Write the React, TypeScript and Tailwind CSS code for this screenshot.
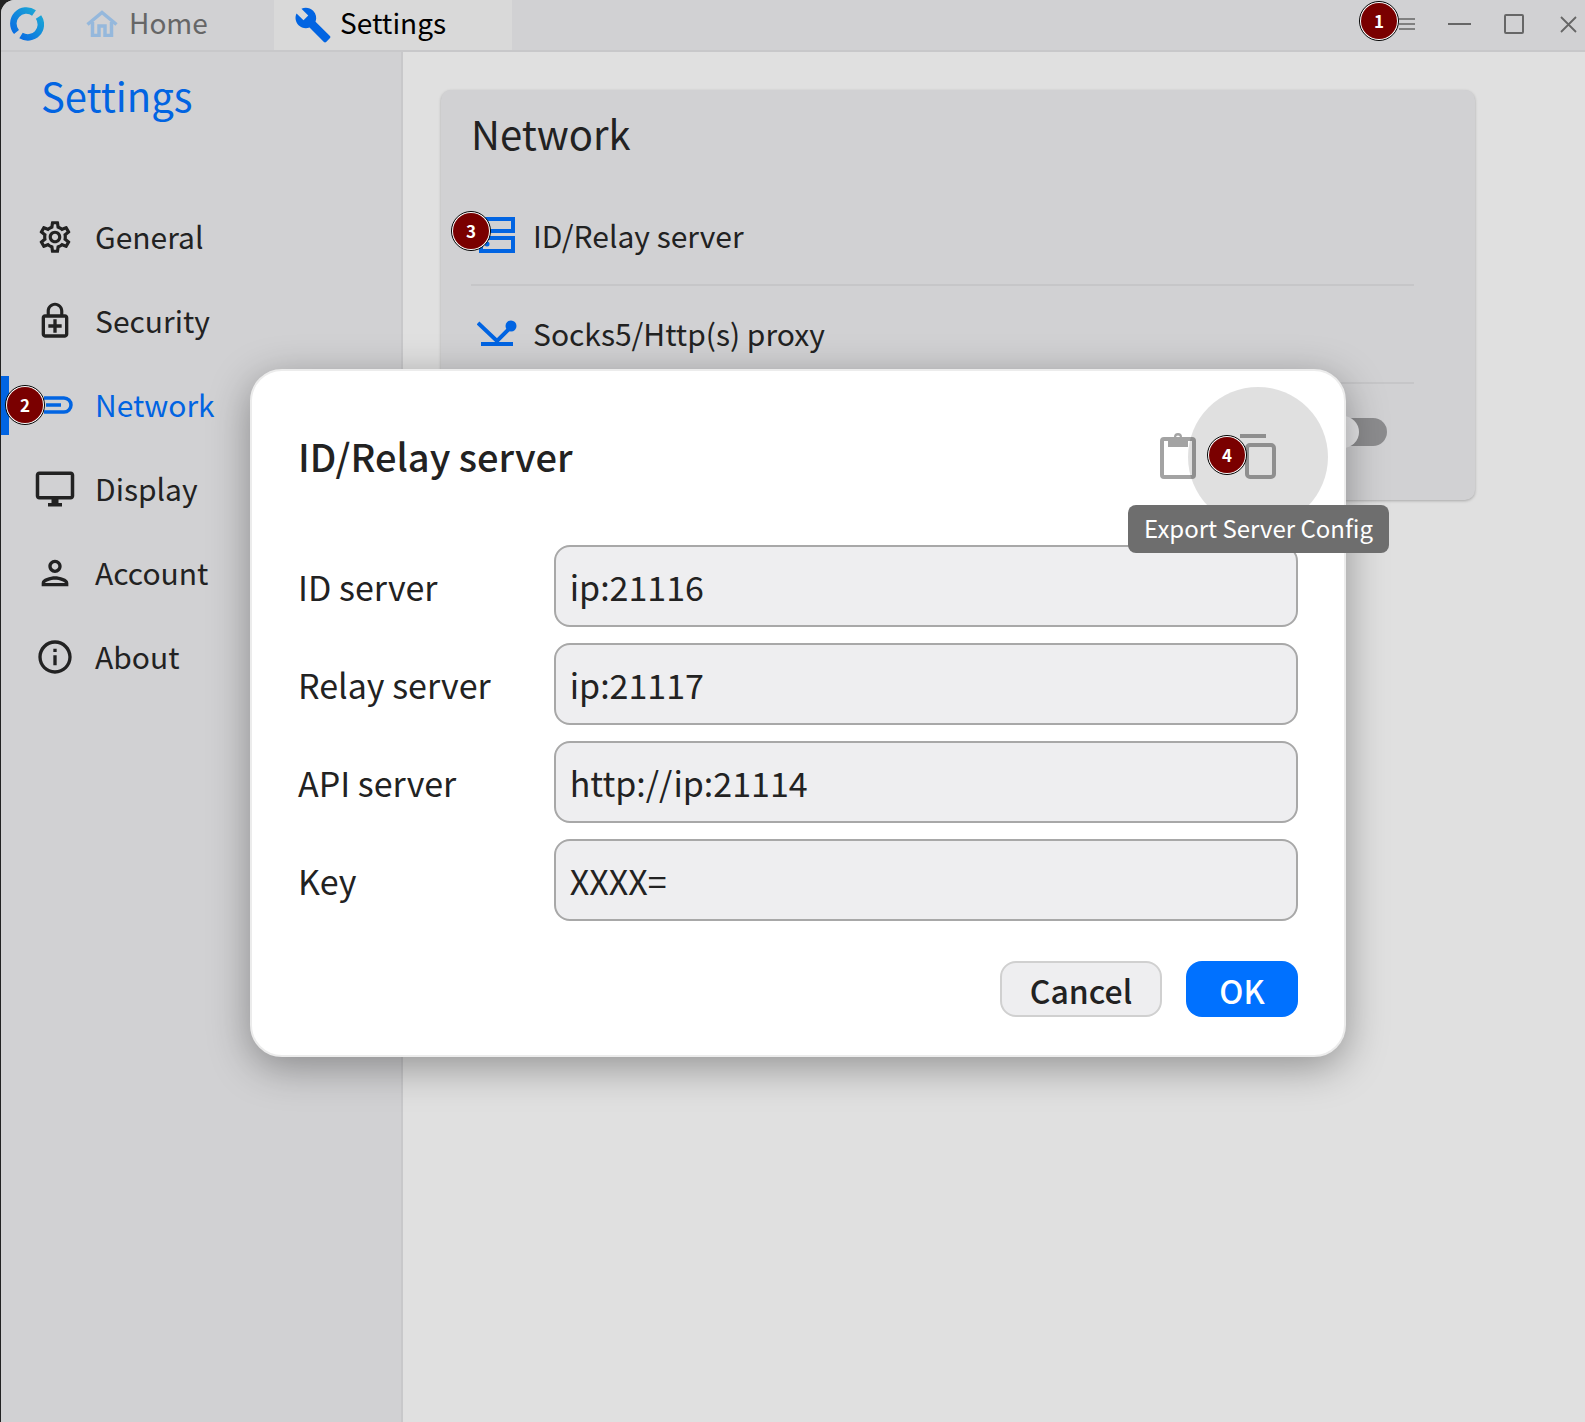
import { MdBuild, MdInfoOutline, MdOutlineDesktopWindows, MdOutlineEnhancedEncryption, MdOutlinePerson, MdOutlineSettings } from 'react-icons/md';

const font = { fontFamily: '"Noto Sans CJK SC", "Noto Sans", sans-serif' };

function Badge({ n, className }: { n: number; className: string }) {
  return (
    <div className={`absolute z-30 flex h-[40px] w-[40px] items-center justify-center rounded-full border border-black bg-white ${className}`}>
      <div className="flex h-[36px] w-[36px] items-center justify-center rounded-full bg-[#7a0000] text-[17px] font-bold text-white">{n}</div>
    </div>
  );
}

function Logo() {
  return (
    <svg width="34" height="34" viewBox="0 0 34 34" fill="none">
      <defs>
        <linearGradient id="logoA" x1="0" y1="1" x2="1" y2="0">
          <stop offset="0" stopColor="#0a6fe2" />
          <stop offset="1" stopColor="#1aa3d6" />
        </linearGradient>
        <linearGradient id="logoB" x1="1" y1="0" x2="0" y2="1">
          <stop offset="0" stopColor="#1aa3d6" />
          <stop offset="1" stopColor="#0a6fe2" />
        </linearGradient>
      </defs>
      <path d="M6.500 25A13 13 0 0 1 24 6" stroke="url(#logoA)" strokeWidth="6.500" />
      <path d="M28.500 10A13 13 0 0 1 11 28.500" stroke="url(#logoB)" strokeWidth="6.500" />
    </svg>
  );
}

function HomeIcon() {
  return (
    <svg width="32" height="27" viewBox="0 0 32 27" fill="none" stroke="#95b8dc" strokeWidth="3.500">
      <path d="M1.500 14.500 16 2.500l14.500 12" />
      <path d="M6.500 12v13.500h6.500V16h6v9.500h6.500V12" />
    </svg>
  );
}

function NetworkIcon() {
  return (
    <svg className="ml-[6px]" width="32" height="18" viewBox="0 0 32 18" fill="none" stroke="#0164e2" strokeWidth="3.500">
      <path d="M2 2h20a7 7 0 0 1 0 14H2" />
      <path d="M4 9h15" />
    </svg>
  );
}

function ServerIcon() {
  return (
    <svg width="36" height="36" viewBox="0 0 36 36" fill="none" stroke="#0164e2" strokeWidth="4">
      <path d="M2 2h32v12H2zM2 21h32v13H2z" />
      <circle cx="8" cy="27" r="2.500" fill="#0164e2" stroke="none" />
    </svg>
  );
}

function ProxyIcon() {
  return (
    <svg width="40" height="26" viewBox="0 0 40 26" fill="none" stroke="#0164e2" strokeWidth="4">
      <path d="M1 3 20 21 33 8" />
      <path d="M4 24h32" />
      <circle cx="34" cy="6" r="5.500" fill="#0164e2" stroke="none" />
    </svg>
  );
}

function ClipboardIcon() {
  return (
    <svg width="38" height="46" viewBox="0 0 38 46" fill="none">
      <rect x="2" y="6" width="32" height="38" rx="2" stroke="#a3a3a3" strokeWidth="4" />
      <path fillRule="evenodd" d="M8 4h6a4 4 0 0 1 8 0h6v10H8zM18 2.500a2 2 0 1 0 0 4 2 2 0 0 0 0-4z" fill="#a3a3a3" />
    </svg>
  );
}

function CopyIcon() {
  return (
    <svg width="40" height="46" viewBox="0 0 40 46" fill="none" stroke="#a3a3a3" strokeWidth="4">
      <path d="M2 3h26" />
      <rect x="9" y="12" width="27" height="32" rx="3" />
    </svg>
  );
}

const navItems = [
  { label: 'General', icon: <MdOutlineSettings size={38} color="#222" /> },
  { label: 'Security', icon: <MdOutlineEnhancedEncryption size={40} color="#222" /> },
  { label: 'Network', icon: <NetworkIcon />, active: true },
  { label: 'Display', icon: <MdOutlineDesktopWindows size={42} color="#222" /> },
  { label: 'Account', icon: <MdOutlinePerson size={40} color="#222" /> },
  { label: 'About', icon: <MdInfoOutline size={40} color="#222" /> },
];

const fields = [
  { label: 'ID server', value: 'ip:21116' },
  { label: 'Relay server', value: 'ip:21117' },
  { label: 'API server', value: 'http://ip:21114' },
  { label: 'Key', value: 'XXXX=' },
];

export default function App() {
  return (
    <div className="relative h-[1422px] w-[1585px] overflow-hidden bg-[#222]" style={font}>
      <div className="ml-px flex h-full flex-col overflow-hidden rounded-tl-[14px] bg-[#e0e0e0]">
        {/* Title bar */}
        <div className="flex h-[52px] shrink-0 items-stretch border-b-2 border-[#c8c8ca] bg-[#d1d1d3]">
          <div className="flex w-[273px] items-center">
            <div className="ml-[9px] mb-[2px]"><Logo /></div>
            <div className="ml-[42px] mb-[4px]"><HomeIcon /></div>
            <span className="ml-[11px] pb-[7px] text-[28px] text-[#666]">Home</span>
          </div>
          <div className="flex w-[238px] items-center bg-[#d9d9d9] pl-[20px]">
            <MdBuild size={38} color="#0164e2" />
            <span className="ml-[8px] pb-[7px] text-[28px] text-black">Settings</span>
          </div>
          <div className="ml-auto flex items-center pb-[2px] pr-[8px]">
            <svg width="16" height="16" viewBox="0 0 16 16" stroke="#666" strokeWidth="1.500"><path d="M0 3h16M0 8h16M0 13h16" /></svg>
            <svg className="ml-[33px]" width="23" height="4" viewBox="0 0 23 4" stroke="#666" strokeWidth="2"><path d="M0 2h23" /></svg>
            <svg className="ml-[33px]" width="20" height="20" viewBox="0 0 20 20" fill="none" stroke="#666" strokeWidth="2"><rect x="1" y="1" width="18" height="18" rx="1" /></svg>
            <svg className="ml-[36px]" width="17" height="17" viewBox="0 0 17 17" stroke="#666" strokeWidth="1.800"><path d="M1 1l15 15M16 1 1 16" /></svg>
          </div>
        </div>

        <div className="flex min-h-0 flex-1">
          {/* Sidebar */}
          <div className="w-[402px] shrink-0 border-r-2 border-[#c8c8ca] bg-[#d1d1d3]">
            <div className="pl-[40px] pt-[13px] text-[40px] leading-[60px] text-[#0164e2]">Settings</div>
            <div className="mt-[70px] flex flex-col">
              {navItems.map((item) => (
                <div key={item.label} className="relative flex h-[84px] items-center">
                  {item.active && <div className="absolute left-0 top-[13px] h-[59px] w-[8px] bg-[#0164e2]" />}
                  <div className="flex w-[94px] justify-center pl-[13px]">{item.icon}</div>
                  <span className={`pb-[2px] text-[30px] ${item.active ? 'text-[#0164e2]' : 'text-[#222]'}`}>{item.label}</span>
                </div>
              ))}
            </div>
          </div>

          {/* Network panel */}
          <div className="flex-1 pl-[38px] pt-[38px]">
            <div className="h-[410px] w-[1034px] overflow-hidden rounded-[10px] bg-[#d1d1d3] pl-[30px] shadow-[0_1px_3px_rgba(0,0,0,0.25)]">
              <div className="pt-[10px] text-[40px] leading-[66px] text-[#222]">Network</div>
              <div className="mt-[23px] flex h-[97px] w-[943px] items-center border-b-2 border-[#c6c6c8] pb-[3px]">
                <div className="flex w-[62px] justify-end pr-[18px]"><ServerIcon /></div>
                <span className="text-[30px] text-[#222]">ID/Relay server</span>
              </div>
              <div className="flex h-[98px] w-[943px] items-center border-b-2 border-[#c6c6c8] pb-[2px]">
                <div className="flex w-[62px] justify-end pr-[16px]"><ProxyIcon /></div>
                <span className="text-[30px] text-[#222]">Socks5/Http(s) proxy</span>
              </div>
              <div className="flex w-[916px] items-center justify-end pt-[34px]">
                <div className="relative h-[28px] w-[60px] rounded-full bg-[#8c8c8e]">
                  <div className="absolute left-0 top-[-2px] h-[32px] w-[32px] rounded-full bg-[#e6e6e8]" />
                </div>
              </div>
            </div>
          </div>
        </div>
      </div>

      {/* ID/Relay server dialog */}
      <div className="absolute left-[250px] top-[369px] z-10 h-[688px] w-[1096px] rounded-[32px] border-2 border-[#ececec] bg-white px-[46px] shadow-[0_10px_40px_rgba(0,0,0,0.35)]">
        <div className="flex h-[174px] items-center justify-between">
          <div className="pb-[5px] text-[38px] font-medium text-[#222]">ID/Relay server</div>
          <div className="mr-[20px] flex -translate-y-[2px] items-center gap-[40px]">
            <ClipboardIcon />
            <CopyIcon />
          </div>
        </div>
        <div className="flex flex-col gap-[16px]">
          {fields.map((f) => (
            <div key={f.label} className="flex items-center">
              <div className="w-[256px] text-[34px] text-[#222]">{f.label}</div>
              <div className="flex h-[82px] w-[745px] items-center rounded-[16px] border-2 border-[#a8a8a8] bg-[#eeeef0] pl-[14px] text-[34px] text-[#222]">{f.value}</div>
            </div>
          ))}
        </div>
        <div className="mt-[40px] flex justify-end gap-[24px]">
          <div className="flex h-[56px] w-[162px] items-center justify-center rounded-[16px] border-2 border-[#d0d0d0] bg-[#eeeef0] pt-[2px] text-[32px] font-medium text-[#222]">Cancel</div>
          <div className="flex h-[56px] w-[112px] items-center justify-center rounded-[16px] bg-[#0071ff] pt-[2px] text-[32px] font-medium text-white">OK</div>
        </div>
      </div>

      {/* Hover circle and tooltip */}
      <div className="absolute left-[1188px] top-[387px] z-10 h-[140px] w-[140px] rounded-full bg-[#000]/[0.12]" />
      <div className="absolute left-[1128px] top-[505px] z-20 flex h-[48px] w-[261px] items-center justify-center rounded-[8px] bg-[#6e6e6e] pb-[2px] text-[24px] text-white">Export Server Config</div>

      <Badge n={1} className="left-[1359px] top-[1px]" />
      <Badge n={2} className="left-[5px] top-[385px]" />
      <Badge n={3} className="left-[451px] top-[211px]" />
      <Badge n={4} className="left-[1207px] top-[435px]" />
    </div>
  );
}
